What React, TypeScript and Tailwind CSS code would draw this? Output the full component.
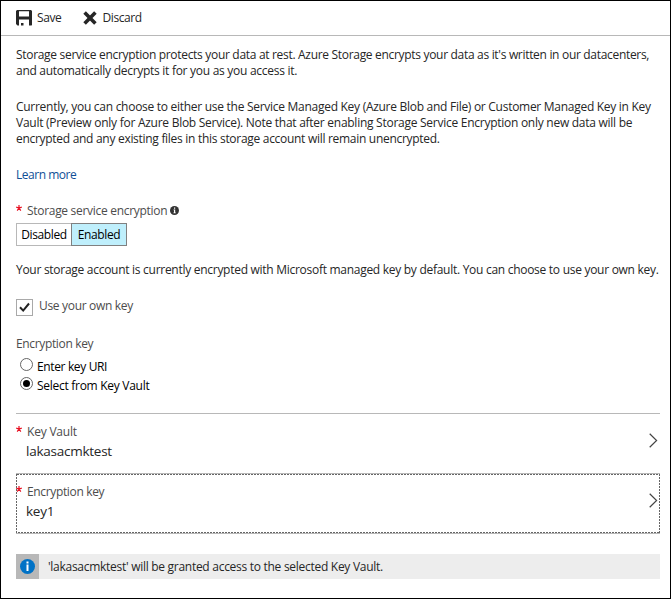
import React from "react";

function SaveIcon() {
  return (
    <svg width="16" height="16" viewBox="0 0 16 16">
      <path fillRule="evenodd" fill="#262626" d="M1 0H15L16 1V15L15.5 15.5H13V9.5H3V15.5H1.5L0 14V1ZM3 1.2V6.6H13V1.2Z" />
      <path fill="#262626" d="M5 13H7.5V15.5H5Z" />
    </svg>
  );
}

function DiscardIcon() {
  return (
    <svg width="14" height="14" viewBox="0 0 14 14">
      <path d="M1.6 1.6L12.4 12.4M12.4 1.6L1.6 12.4" stroke="#262626" strokeWidth="3.6" />
    </svg>
  );
}

function Chevron() {
  return (
    <svg width="9" height="15" viewBox="0 0 9 15" className="mr-0.5">
      <path d="M0.7 0.7L7.6 7.5L0.7 14.3" fill="none" stroke="#444" strokeWidth="1.2" />
    </svg>
  );
}

function Star() {
  return (
    <svg width="6" height="6" viewBox="0 0 6 6" className="mt-[2px]">
      <path d="M3 3V0M3 3L0.2 2.2M3 3L5.8 2.2M3 3L1.2 5.6M3 3L4.8 5.6" stroke="#e81123" strokeWidth="1.2" />
    </svg>
  );
}

function Radio({ children, checked }: { children: React.ReactNode; checked?: boolean }) {
  return (
    <div className="flex h-[19px] items-start pl-1">
      <svg width="13" height="13" viewBox="0 0 13 13">
        <circle cx="6.5" cy="6.5" r="6" fill="#fff" stroke="#555" strokeWidth="0.9" />
        {checked && <circle cx="6.5" cy="6.5" r="3.5" fill="#000" />}
      </svg>
      <span className="ml-1 mt-px text-black">{children}</span>
    </div>
  );
}

export default function App() {
  return (
    <div className="h-[599px] w-[671px] overflow-hidden whitespace-nowrap border border-black bg-white font-['Open_Sans',sans-serif] text-[12px] leading-4 tracking-[-0.28px] text-[#262626]">
      <div className="flex h-[35px] items-center border-b border-[#b8b8b8] pl-[15px]">
        <SaveIcon />
        <span className="ml-[5px] w-[25px] tracking-[-0.4px]">Save</span>
        <span className="ml-[20.5px]"><DiscardIcon /></span>
        <span className="ml-[6px] tracking-[-0.42px]">Discard</span>
      </div>
      <div className="pl-[15px] pr-[10px] pt-[11px]">
        <p className="tracking-[-0.31px]">Storage service encryption protects your data at rest. Azure Storage encrypts your data as it's written in our datacenters,</p>
        <p>and automatically decrypts it for you as you access it.</p>
        <p className="mt-5">Currently, you can choose to either use the Service Managed Key (Azure Blob and File) or Customer Managed Key in Key</p>
        <p className="tracking-[-0.263px]">Vault (Preview only for Azure Blob Service). Note that after enabling Storage Service Encryption only new data will be</p>
        <p className="tracking-[-0.293px]">encrypted and any existing files in this storage account will remain unencrypted.</p>
        <p className="mt-5 tracking-[-0.48px] text-[#0f4f96]">Learn more</p>
        <div className="mt-5 flex h-4 text-[#4c4c4c]">
          <Star />
          <span className="ml-[5px] w-[140px] tracking-[-0.3px]">Storage service encryption</span>
          <svg width="9" height="9" viewBox="0 0 9 9" className="ml-[3px] mt-[3px]">
            <circle cx="4.5" cy="4.5" r="4.5" fill="#333" />
            <path d="M4 1.5H5.2V2.7H4ZM3.5 3.6H5.2V6.6H5.8V7.3H3.4V6.6H4V4.3H3.5Z" fill="#fff" />
          </svg>
        </div>
        <div className="mt-1 flex h-[23px] w-[111px] tracking-[-0.37px] text-black">
          <div className="flex w-[55px] items-center justify-center border border-r-0 border-[#b8b8b8]">Disabled</div>
          <div className="flex w-14 items-center justify-center border border-[#808080] bg-[#bfeffc]">Enabled</div>
        </div>
        <p className="mt-4">Your storage account is currently encrypted with Microsoft managed key by default. You can choose to use your own key.</p>
        <div className="mt-[21px] flex h-[17px] text-[#4c4c4c]">
          <div className="flex size-[17px] items-center justify-center border border-[#a9a9a9]">
            <svg width="11" height="11" viewBox="0 0 11 11"><path d="M1 5.2L4.2 8.6L10 1.5" fill="none" stroke="#222" strokeWidth="2" /></svg>
          </div>
          <span className="-mt-px ml-[6px] tracking-[-0.32px]">Use your own key</span>
        </div>
        <p className="mt-5 tracking-[-0.35px] text-[#4c4c4c]">Encryption key</p>
        <div className="mt-[6px]">
          <Radio><span className="tracking-[-0.36px]">Enter key URI</span></Radio>
          <Radio checked>Select from Key Vault</Radio>
        </div>
        <div className="mt-[17px] flex h-[60px] border-t border-[#b8b8b8] pt-[10px]">
          <Star />
          <div className="ml-1 flex-1">
            <p className="ml-px tracking-[-0.2px] text-[#4c4c4c]">Key Vault</p>
            <p className="mt-[2px] text-[13.5px] leading-[18px] tracking-[-0.25px]">lakasacmktest</p>
          </div>
          <div className="mt-[9px]"><Chevron /></div>
        </div>
        <div className="h-[61px] border-y border-[#b8b8b8]">
          <div className="relative flex h-[59px] pt-[10px]">
            <svg width="644" height="59" className="absolute left-0 top-0" shapeRendering="crispEdges">
              <rect x="0.5" y="0.5" width="643" height="58" fill="none" stroke="#666" strokeDasharray="2 1" />
            </svg>
            <Star />
            <div className="ml-1 flex-1">
              <p className="ml-px tracking-[-0.35px] text-[#4c4c4c]">Encryption key</p>
              <p className="mt-[2px] text-[13.5px] leading-[18px] tracking-[-0.25px]">key1</p>
            </div>
            <div className="mt-[9px]"><Chevron /></div>
          </div>
        </div>
        <div className="mt-5 flex h-[25px] items-center bg-[#ededed]">
          <div className="flex h-[25px] w-[23px] items-center justify-center bg-[#b8b8b8]">
            <svg width="15" height="15" viewBox="0 0 15 15">
              <circle cx="7.5" cy="7.5" r="7.5" fill="#0072c6" />
              <path d="M6.5 2.5H8.5V4.5H6.5ZM6.5 5.5H8.5V12H6.5Z" fill="#fff" />
            </svg>
          </div>
          <span className="ml-[9px]">'lakasacmktest' will be granted access to the selected Key Vault.</span>
        </div>
      </div>
    </div>
  );
}
